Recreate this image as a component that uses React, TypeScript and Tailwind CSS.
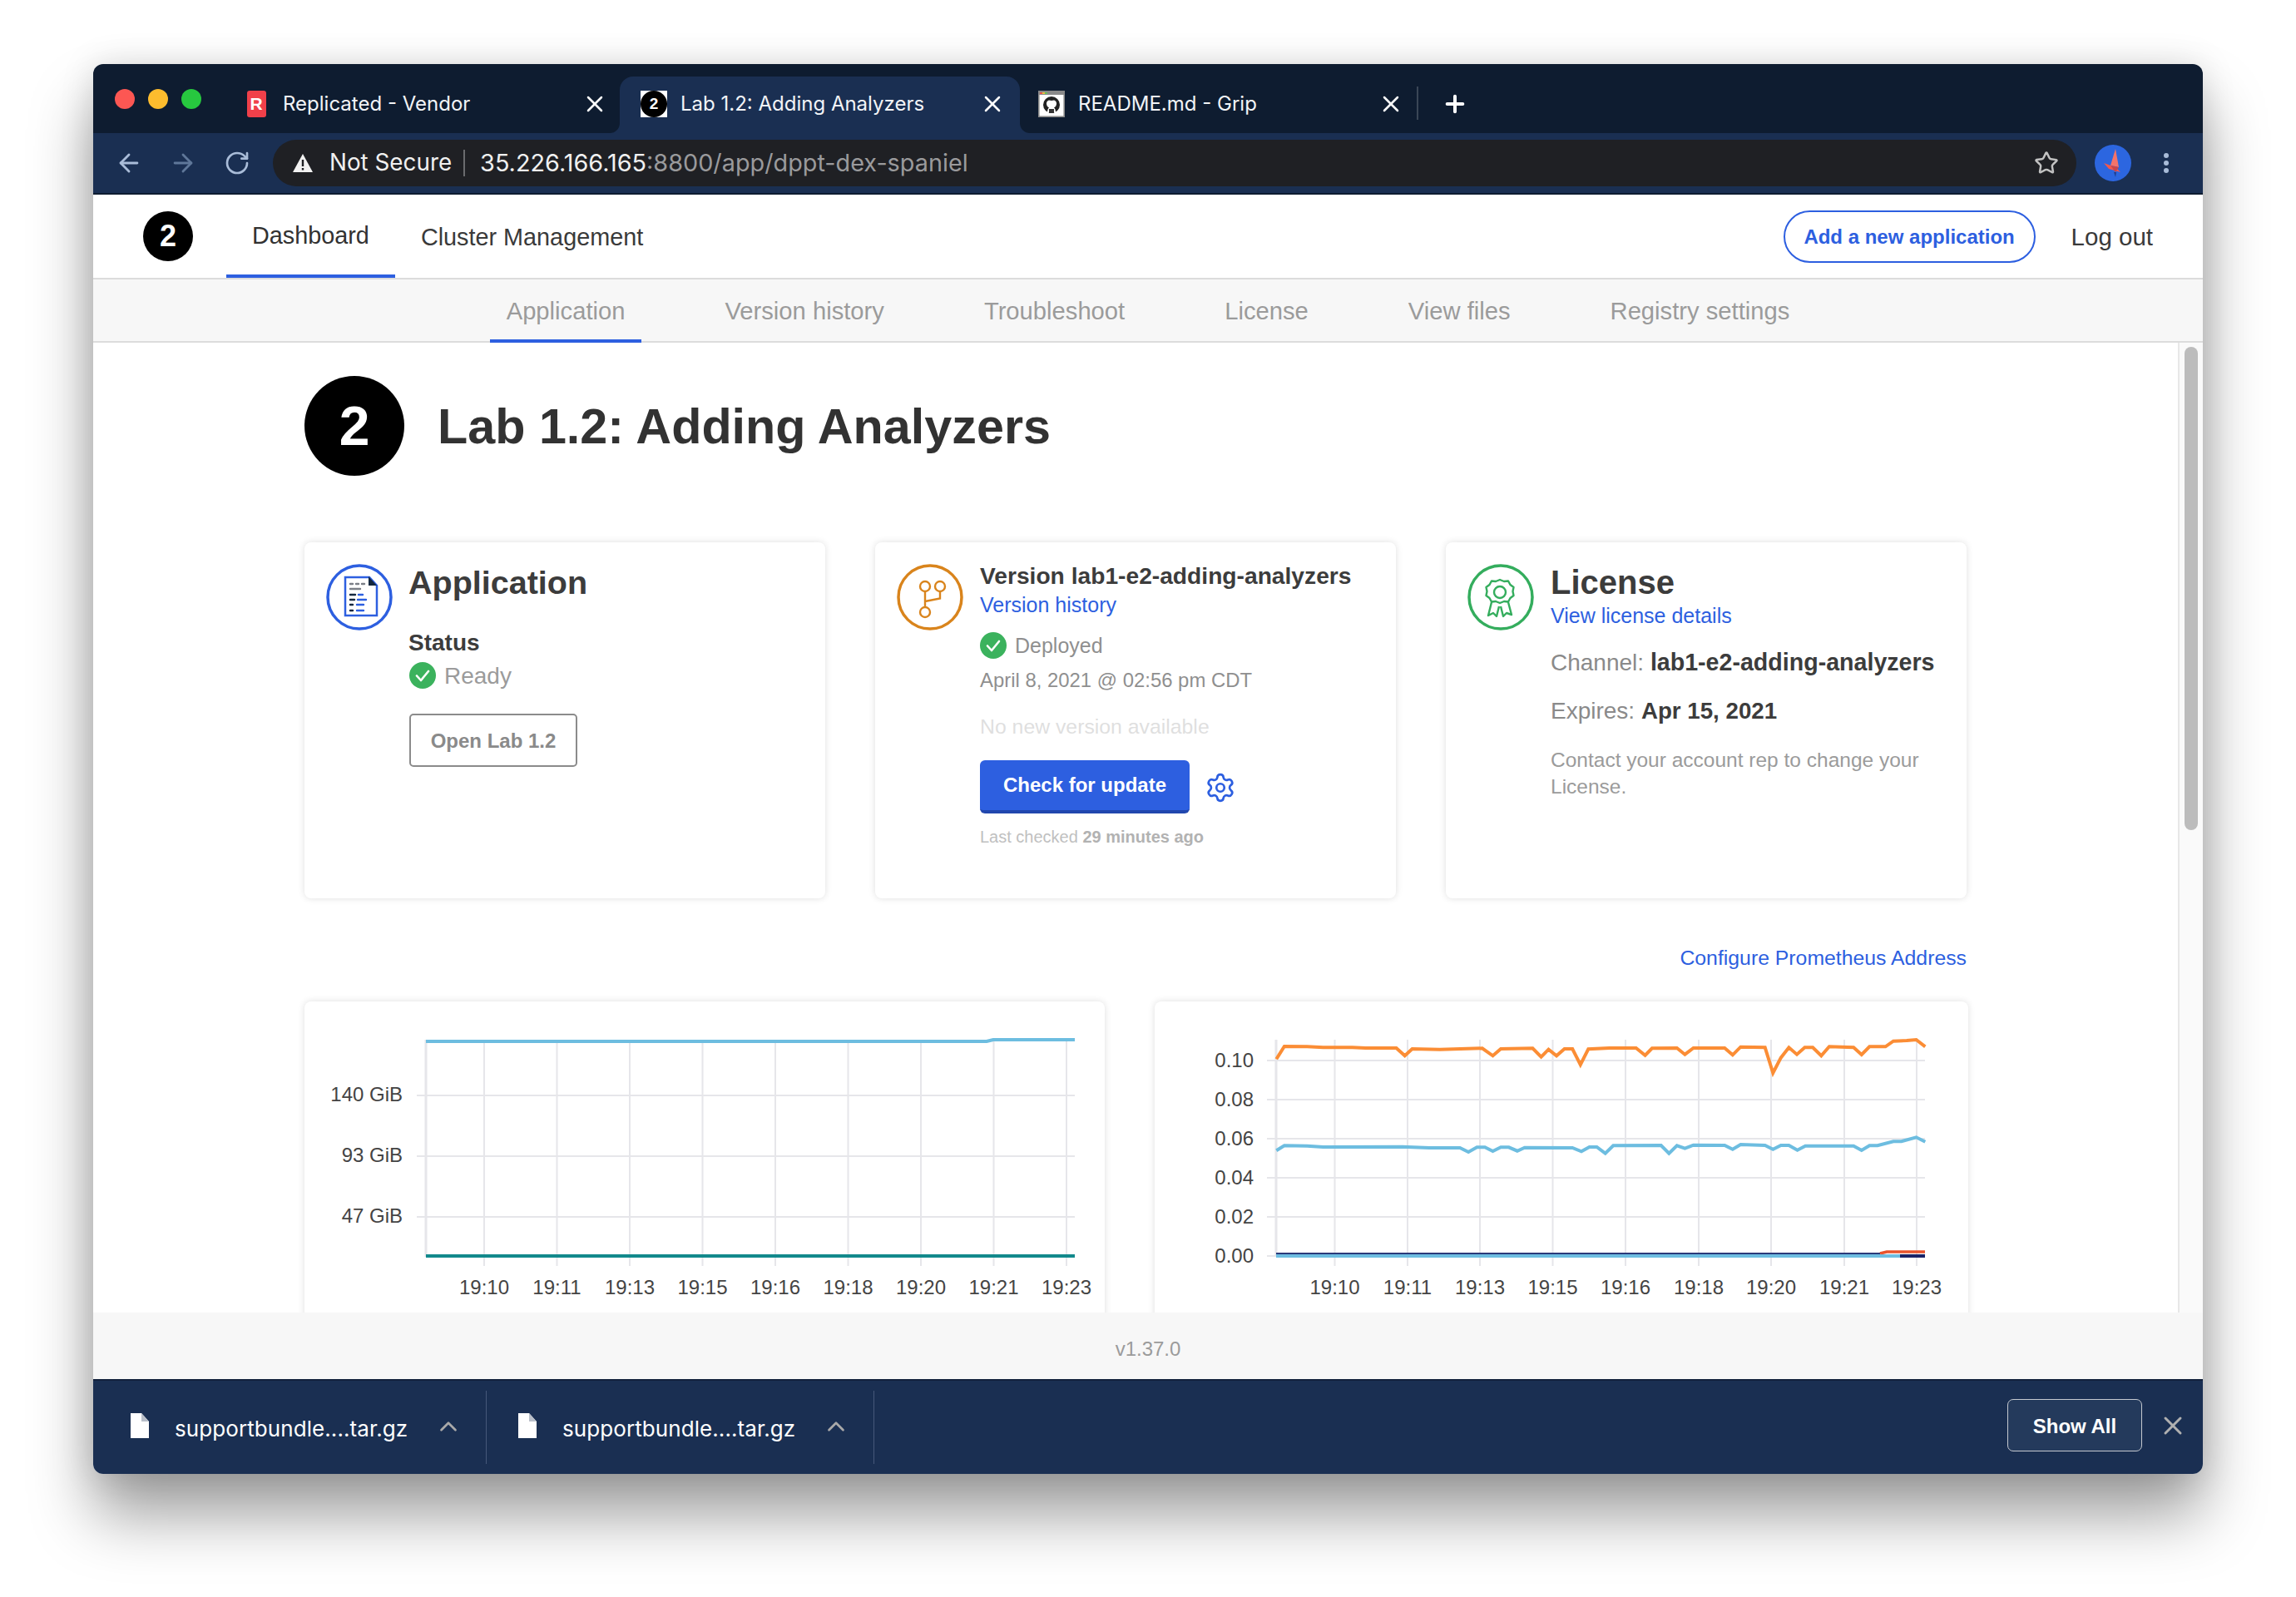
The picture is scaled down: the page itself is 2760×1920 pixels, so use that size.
import React from "react";
import { ArrowLeft, ArrowRight, RotateCw, Star, Plus, X, ChevronUp, Settings } from "lucide-react";

const Favicon2 = () => (
  <div className="w-[32px] h-[32px] bg-white flex items-center justify-center shrink-0">
    <div className="w-[32px] h-[32px] rounded-full bg-black text-white text-[19px] font-bold flex items-center justify-center">2</div>
  </div>
);

const FaviconR = () => (
  <div className="w-[32px] h-[32px] flex items-center justify-center shrink-0">
    <div className="w-[23px] h-[32px] rounded-[3px] bg-[#f0404a] text-white text-[21px] font-bold flex items-center justify-center font-['Liberation_Sans']">R</div>
  </div>
);

const FaviconGit = () => (
  <svg width="32" height="32" viewBox="0 0 32 32" className="shrink-0">
    <rect x="0" y="0" width="32" height="32" fill="#ffffff" />
    <rect x="0" y="0" width="32" height="5" fill="#8a8a8a" />
    <rect x="2" y="2" width="3" height="2" fill="#e9574c" />
    <rect x="5" y="2" width="3" height="2" fill="#e8c13d" />
    <rect x="8" y="2" width="3" height="2" fill="#6fbf5b" />
    <rect x="0.8" y="0.8" width="30.4" height="30.4" fill="none" stroke="#8a8a8a" strokeWidth="1.6" />
    <circle cx="16" cy="17" r="10" fill="#222" />
    <path d="M11 26c0-3 1-5 2-5.500-2-1-3-3-3-5s1-3.500 3-4c2 .5 4 .5 6 0 2 .5 3 2 3 4s-1 4-3 5c1 .5 2 2.500 2 5.500z" fill="#fff" />
    <path d="M13 27v-5h6v5z" fill="#333" />
  </svg>
);

const Tab = ({ title, icon, active, pad }: { title: string; icon: React.ReactNode; active?: boolean; pad: string }) => (
  <div className={`relative w-[481px] h-[68px] flex items-center gap-[16px] rounded-t-[16px] ${pad} ${active ? "bg-[#1a2f52]" : ""}`}>
    {icon}
    <span className="flex-1 text-[24px] text-[#f2f4f7] font-['Inter'] whitespace-nowrap">{title}</span>
    <X size={32} strokeWidth={1.9} className="text-white shrink-0" />
    {active && (
      <>
        <span className="absolute left-[-12px] bottom-0 w-[12px] h-[12px] bg-[#1a2f52]">
          <span className="block w-[12px] h-[12px] bg-[#0e1c30] rounded-br-[12px]" />
        </span>
        <span className="absolute right-[-12px] bottom-0 w-[12px] h-[12px] bg-[#1a2f52]">
          <span className="block w-[12px] h-[12px] bg-[#0e1c30] rounded-bl-[12px]" />
        </span>
      </>
    )}
  </div>
);

const Check = () => (
  <svg width="32" height="32" viewBox="0 0 32 32" className="shrink-0">
    <circle cx="16" cy="16" r="16" fill="#3bb25d" />
    <path d="M9 16.500l5 5.500 9-11" fill="none" stroke="#fff" strokeWidth="2.600" strokeLinecap="round" strokeLinejoin="round" />
  </svg>
);

const DocIcon = () => (
  <svg width="80" height="80" viewBox="0 0 80 80" className="shrink-0">
    <circle cx="40" cy="40" r="38" fill="none" stroke="#2d5fe0" strokeWidth="3.500" />
    <path d="M23 16h29l9 10v36H23z" fill="#fff" stroke="#2d5fe0" strokeWidth="2.500" />
    <path d="M51 15l10 11H51z" fill="#14283f" />
    <g strokeWidth="2.400" strokeLinecap="round" fill="none">
      <path d="M29 24h3M36 24h3M43 24h3M29 30h12" stroke="#7b7f87" />
      <path d="M29 37h6M29 43h5M29 49h3M29 56h3" stroke="#14283f" />
      <path d="M39 37h5M38 43h10M37 49h8M37 56h8" stroke="#2d5fe0" />
    </g>
  </svg>
);

const BranchIcon = () => (
  <svg width="80" height="80" viewBox="0 0 80 80" className="shrink-0">
    <circle cx="40" cy="40" r="38" fill="none" stroke="#d9841c" strokeWidth="3.500" />
    <g fill="none" stroke="#d9841c" strokeWidth="2.400">
      <circle cx="34" cy="27" r="6" />
      <circle cx="52" cy="27" r="6" />
      <circle cx="34" cy="58" r="6" />
      <path d="M34 33v19M52 33v8.500L34 45" />
    </g>
  </svg>
);

const RibbonIcon = () => (
  <svg width="80" height="80" viewBox="0 0 80 80" className="shrink-0">
    <circle cx="40" cy="40" r="38" fill="none" stroke="#34ad5d" strokeWidth="3.500" />
    <g fill="none" stroke="#34ad5d" strokeWidth="2.400" strokeLinejoin="round">
      <path d="M39 19l5 2 5-.5 2.500 4.500 4 3-1 5 1 5-4 3-2.500 4.500-5-.5-5 2-5-2-5 .5-2.500-4.500-4-3 1-5-1-5 4-3 2.500-4.500 5 .5z" />
      <circle cx="39" cy="34" r="7" />
      <path d="M29 46l-4 16 6-3 4 4 3-12M49 46l4 15-6-2-4 4-3-12" />
    </g>
  </svg>
);

const Card = ({ icon, children }: { icon: React.ReactNode; children: React.ReactNode }) => (
  <div className="h-[428px] bg-white rounded-[8px] shadow-[0_0_8px_rgba(0,0,0,0.13)] pl-[26px] pt-[26px] flex gap-[20px]">
    {icon}
    <div className="flex-1 min-w-0">{children}</div>
  </div>
);

const times = ["19:10", "19:11", "19:13", "19:15", "19:16", "19:18", "19:20", "19:21", "19:23"];

const Chart1 = () => {
  const vx = [582, 669.5, 757, 844.5, 932, 1019.5, 1107, 1194.5, 1282];
  return (
    <svg className="block" width="962" height="400" viewBox="366 1204 962 400">
      <g stroke="#e6e6ea" strokeWidth="2">
        <path d="M512 1250V1511" strokeWidth="3" />
        {[1317, 1390, 1463].map((y) => <path key={y} d={`M501 ${y}H1292`} />)}
        {vx.map((x) => <path key={x} d={`M${x} 1250V1522`} />)}
      </g>
      <path d="M512 1252H1186L1194 1250H1292" fill="none" stroke="#6dbde0" strokeWidth="4" />
      <path d="M512 1510H1292" fill="none" stroke="#12898c" strokeWidth="4" />
      <g fontFamily="Liberation Sans" fontSize="24" fill="#444" textAnchor="end">
        <text x="484" y="1324">140 GiB</text>
        <text x="484" y="1397">93 GiB</text>
        <text x="484" y="1470">47 GiB</text>
      </g>
      <g fontFamily="Liberation Sans" fontSize="24" fill="#444" textAnchor="middle">
        {vx.map((x, i) => <text key={x} x={x} y="1555.500">{times[i]}</text>)}
      </g>
    </svg>
  );
};

const orange: number[][] = [[242,280],[257,234],[300,235],[330,238],[385,238],[410,240],[468,240],[484,268],[498,243],[550,245],[630,241],[650,268],[665,243],[725,241],[741,272],[755,245],[770,268],[785,243],[800,243],[815,300],[830,244],[870,240],[920,240],[937,266],[950,241],[997,240],[1012,263],[1028,240],[1087,240],[1102,265],[1117,236],[1163,238],[1178,330],[1193,275],[1208,238],[1223,263],[1238,238],[1253,238],[1269,268],[1284,235],[1330,238],[1345,264],[1360,235],[1390,235],[1405,215],[1430,213],[1448,210],[1465,235]];
const blue: number[][] = [[242,610],[257,592],[300,593],[330,597],[480,596],[530,600],[588,600],[604,615],[620,598],[635,598],[650,612],[665,598],[680,598],[696,611],[710,599],[800,600],[817,613],[832,597],[846,597],[862,620],[877,592],[967,591],[982,620],[997,592],[1012,602],[1028,590],[1087,591],[1102,605],[1117,588],[1163,591],[1178,605],[1193,591],[1208,591],[1224,608],[1239,593],[1330,593],[1345,609],[1360,592],[1375,592],[1405,577],[1420,577],[1448,562],[1465,578]];
const toPts = (p: number[][]) => p.map(([x, y]) => `${(1380 + x / 1.568).toFixed(1)},${(1180 + y / 3).toFixed(1)}`).join(" ");

const Chart2 = () => {
  const vx = [1604.5, 1692, 1779, 1866.5, 1954, 2042, 2129, 2217, 2304];
  const ys: [number, string][] = [[1275, "0.10"], [1322, "0.08"], [1369, "0.06"], [1416, "0.04"], [1463, "0.02"], [1510, "0.00"]];
  return (
    <svg className="block" width="978" height="400" viewBox="1388 1204 978 400">
      <g stroke="#e6e6ea" strokeWidth="2">
        <path d="M1534 1250V1511" strokeWidth="3" />
        {ys.map(([y]) => <path key={y} d={`M1523 ${y}H2314`} />)}
        {vx.map((x) => <path key={x} d={`M${x} 1250V1522`} />)}
      </g>
      <polyline points={toPts(orange)} fill="none" stroke="#fb8d35" strokeWidth="4" />
      <polyline points={toPts(blue)} fill="none" stroke="#6dbde0" strokeWidth="4" />
      <path d="M1534 1507H2260" stroke="#2a3a7a" strokeWidth="2" />
      <path d="M2260 1507L2268 1505H2314" stroke="#e8532b" strokeWidth="3.500" fill="none" />
      <path d="M2284 1510H2314" stroke="#1a2468" strokeWidth="4" />
      <path d="M1534 1510H2284" stroke="#6dbde0" strokeWidth="4" />
      <g fontFamily="Liberation Sans" fontSize="24" fill="#444" textAnchor="end">
        {ys.map(([y, l]) => <text key={y} x="1507" y={y + 8}>{l}</text>)}
      </g>
      <g fontFamily="Liberation Sans" fontSize="24" fill="#444" textAnchor="middle">
        {vx.map((x, i) => <text key={x} x={x} y="1555.500">{times[i]}</text>)}
      </g>
    </svg>
  );
};

const Download = ({ box }: { box: string }) => (
  <div className={`h-[88px] flex items-center border-r-[1px] border-[#46587a] ${box}`}>
    <svg width="22" height="30" viewBox="0 0 22 30" className="shrink-0 mb-[5px]">
      <path d="M0 0h13l9 10v20H0z" fill="#fff" />
      <path d="M13 0l9 10h-9z" fill="#b9bfc9" />
    </svg>
    <span className="ml-[31px] mt-[3px] text-[26px] text-white font-['Inter'] whitespace-nowrap w-[280px] tracking-[0.08px]">supportbundle....tar.gz</span>
    <ChevronUp size={34} strokeWidth={1.900} className="ml-[32px] text-[#a9a9a9] mb-[2px]" />
  </div>
);

export default function App() {
  return (
    <div className="w-[2760px] h-[1920px] bg-white pt-[77px] pl-[112px] font-['Liberation_Sans',sans-serif] overflow-hidden">
      <div className="w-[2536px] h-[1695px] flex flex-col rounded-[12px] overflow-hidden shadow-[0_50px_75px_rgba(0,0,0,0.38),0_0_40px_rgba(0,0,0,0.13)]">
        {/* Tab strip */}
        <div className="h-[83px] bg-[#0e1c30] flex items-end shrink-0">
          <div className="w-[152px] h-[68px] flex items-center pl-[26px] gap-[16px] pb-[14px]">
            <span className="w-[24px] h-[24px] rounded-full bg-[#fc5753]" />
            <span className="w-[24px] h-[24px] rounded-full bg-[#fdbc2e]" />
            <span className="w-[24px] h-[24px] rounded-full bg-[#27c83f]" />
          </div>
          <Tab title="Replicated - Vendor" icon={<FaviconR />} pad="pl-[28px] pr-[14px] pb-[2px]" />
          <Tab title="Lab 1.2: Adding Analyzers" icon={<Favicon2 />} active pad="pl-[25px] pr-[17px] pb-[2px]" />
          <Tab title="README.md - Grip" icon={<FaviconGit />} pad="pl-[22px] pr-[19px] pb-[2px]" />
          <div className="h-[68px] flex items-center">
            <span className="w-[2px] h-[40px] bg-[#3a4656] mb-[4px] ml-[-4px]" />
            <Plus size={32} strokeWidth={3} className="text-white ml-[28px] mb-[2px]" />
          </div>
        </div>
        {/* Toolbar */}
        <div className="h-[74px] bg-[#1a2f52] border-b-[2px] border-[#0e1c30] flex items-center shrink-0 pl-[26px]">
          <ArrowLeft size={34} strokeWidth={2} className="text-[#a9bcd8]" />
          <ArrowRight size={34} strokeWidth={2} className="text-[#5f7799] ml-[31px]" />
          <RotateCw size={32} strokeWidth={2} className="text-[#a9bcd8] ml-[32px]" />
          <div className="ml-[27px] w-[2168px] h-[56px] rounded-full bg-[#1f2024] flex items-center pl-[23px] pr-[21px]">
            <svg width="26" height="24" viewBox="0 0 26 24" className="shrink-0">
              <path d="M13 1l12 22H1z" fill="#f2f2f2" />
              <path d="M13 8v8M13 18v2.500" stroke="#1f2024" strokeWidth="2.400" />
            </svg>
            <span className="ml-[19px] text-[27.800px] text-[#f0f0f0] font-['Inter'] whitespace-nowrap">Not Secure</span>
            <span className="ml-[14px] w-[2px] h-[32px] bg-[#6a6b6e]" />
            <span className="ml-[18px] text-[28.800px] text-[#f0f0f0] font-['Inter'] whitespace-nowrap flex-1">
              35.226.166.165<span className="text-[#9a9a9c]">:8800/app/dppt-dex-spaniel</span>
            </span>
            <Star size={30} strokeWidth={2} className="text-[#c2c2c2]" />
          </div>
          <div className="ml-[22px] w-[44px] h-[44px] rounded-full bg-[#2c66e0] flex items-center justify-center shrink-0">
            <svg width="34" height="38" viewBox="0 0 34 38">
              <path d="M20 2l4 22-10-2z" fill="#f4736a" />
              <path d="M6 19l14 5 6 6-14-4z" fill="#f0584f" />
              <path d="M14 22l10 2-4 6z" fill="#c9454a" />
              <path d="M18 30l2 6 1-6z" fill="#1f3f90" />
            </svg>
          </div>
          <div className="ml-[39px] w-[8px] flex flex-col gap-[3px] shrink-0">
            <span className="w-[6px] h-[6px] rounded-full bg-[#a9bcd8]" />
            <span className="w-[6px] h-[6px] rounded-full bg-[#a9bcd8]" />
            <span className="w-[6px] h-[6px] rounded-full bg-[#a9bcd8]" />
          </div>
        </div>
        {/* Main nav */}
        <div className="h-[102px] bg-white border-b-[2px] border-[#dcdcdc] flex items-stretch shrink-0 pl-[60px] pr-[60px]">
          <div className="w-[60px] h-[60px] rounded-full bg-black text-white text-[36px] font-bold flex items-center justify-center self-center">2</div>
          <div className="ml-[40px] px-[31px] pt-[4px] flex items-center border-b-[4px] border-[#2d5fe0] text-[28.800px] text-[#323232] whitespace-nowrap">Dashboard</div>
          <div className="px-[31px] pt-[3px] flex items-center text-[28.800px] text-[#3a3a3a] whitespace-nowrap">Cluster Management</div>
          <div className="ml-auto flex items-center">
            <div className="w-[303px] h-[63px] pt-[2px] rounded-[32px] border-[2px] border-[#2d5fe0] text-[#2d5fe0] text-[24px] font-bold flex items-center justify-center">Add a new application</div>
            <span className="ml-[43px] pt-[2px] text-[29.500px] text-[#3a3a3a] whitespace-nowrap">Log out</span>
          </div>
        </div>
        {/* Sub nav */}
        <div className="h-[76px] bg-[#f7f7f7] border-b-[2px] border-[#dcdcdc] flex justify-center gap-[80px] shrink-0">
          {["Application", "Version history", "Troubleshoot", "License", "View files", "Registry settings"].map((t, i) => (
            <div key={t} className={`px-[20px] flex items-center text-[29.200px] text-[#9b9b9b] whitespace-nowrap h-[76px] ${i === 0 ? "pt-[5px] border-b-[4px] border-[#2d5fe0]" : "pt-[1px]"}`}>{t}</div>
          ))}
        </div>
        {/* Main */}
        <div className="h-[1166px] flex overflow-hidden shrink-0 bg-white">
          <div className="flex-1 pl-[254px] pt-[40px]">
            <div className="w-[2000px]">
              <div className="flex items-center gap-[40px] h-[120px]">
                <div className="w-[120px] h-[120px] rounded-full bg-black text-white text-[66px] font-bold flex items-center justify-center">2</div>
                <h1 className="pt-[2px] text-[59.300px] font-bold text-[#323232] whitespace-nowrap">Lab 1.2: Adding Analyzers</h1>
              </div>
              <div className="mt-[80px] grid grid-cols-[626px_626px_626px] gap-[60px]">
                <Card icon={<DocIcon />}>
                  <div className="ml-[-1px] text-[39.500px] leading-[44px] font-bold text-[#3c3c3c]">Application</div>
                  <div className="mt-[34px] ml-[-1px] text-[28px] leading-[34px] font-bold text-[#3c3c3c]">Status</div>
                  <div className="mt-[6px] h-[32px] flex items-center gap-[10px]">
                    <Check />
                    <span className="text-[28px] text-[#9b9b9b] pt-[1px]">Ready</span>
                  </div>
                  <div className="mt-[30px] pt-[2px] w-[202px] h-[64px] border-[2px] border-[#8b8b8b] rounded-[5px] text-[24px] font-bold text-[#8a8a8a] flex items-center justify-center">Open Lab 1.2</div>
                </Card>
                <Card icon={<BranchIcon />}>
                  <div className="mt-[-1px] text-[28.200px] leading-[30px] font-bold text-[#3c3c3c] whitespace-nowrap">Version lab1-e2-adding-analyzers</div>
                  <div className="mt-[5px] text-[25px] leading-[30px] text-[#2d5fe0]">Version history</div>
                  <div className="mt-[18px] h-[32px] flex items-center gap-[10px]">
                    <Check />
                    <span className="text-[25px] text-[#8f8f8f] pt-[1px]">Deployed</span>
                  </div>
                  <div className="mt-[11px] text-[23.900px] leading-[30px] text-[#8f8f8f] whitespace-nowrap">April 8, 2021 @ 02:56 pm CDT</div>
                  <div className="mt-[26px] text-[24.800px] leading-[30px] text-[#dfdfdf] whitespace-nowrap">No new version available</div>
                  <div className="mt-[25px] flex items-center">
                    <div className="w-[252px] h-[64px] rounded-[6px] bg-[#2d5fe0] border-b-[4px] border-[#2147ae] text-white text-[24px] font-bold flex items-center justify-center">Check for update</div>
                    <Settings size={38} strokeWidth={1.700} className="ml-[18px] mt-[2px] text-[#2d5fe0]" />
                  </div>
                  <div className="mt-[15px] text-[20px] leading-[26px] text-[#c0c0c0] whitespace-nowrap">Last checked <span className="font-bold text-[#b2b2b2]">29 minutes ago</span></div>
                </Card>
                <Card icon={<RibbonIcon />}>
                  <div className="text-[40px] leading-[44px] font-bold text-[#3c3c3c]">License</div>
                  <div className="mt-[3px] text-[25px] leading-[30px] text-[#2d5fe0]">View license details</div>
                  <div className="mt-[23px] text-[28px] leading-[36px] text-[#8a8a8a] whitespace-nowrap">Channel: <span className="text-[28.600px] font-bold text-[#3c3c3c]">lab1-e2-adding-analyzers</span></div>
                  <div className="mt-[22px] text-[28px] leading-[36px] text-[#8a8a8a] whitespace-nowrap">Expires: <span className="text-[27.700px] font-bold text-[#3c3c3c]">Apr 15, 2021</span></div>
                  <div className="mt-[25px] w-[460px] text-[24.500px] leading-[32px] text-[#9b9b9b]">Contact your account rep to change your License.</div>
                </Card>
              </div>
              <div className="mt-[52px] pr-[2px] text-right text-[24.800px] leading-[40px] text-[#2d5fe0]">Configure Prometheus Address</div>
              <div className="mt-[32px] flex gap-[60px]">
                <div className="w-[962px] h-[400px] bg-white rounded-[8px] shadow-[0_0_8px_rgba(0,0,0,0.13)]"><Chart1 /></div>
                <div className="w-[978px] h-[400px] bg-white rounded-[8px] shadow-[0_0_8px_rgba(0,0,0,0.13)]"><Chart2 /></div>
              </div>
            </div>
          </div>
          <div className="w-[30px] shrink-0 border-l-[2px] border-[#e8e8e8] bg-[#fafafa] pl-[6px] pt-[5px]">
            <div className="w-[16px] h-[581px] rounded-full bg-[#bcbcbc]" />
          </div>
        </div>
        {/* Footer */}
        <div className="h-[80px] bg-[#f7f7f7] flex items-center justify-center shrink-0 text-[24px] text-[#9b9b9b]">
          <span className="mt-[8px]">v1.37.0</span>
        </div>
        {/* Downloads */}
        <div className="h-[114px] bg-[#1a2f52] border-t-[2px] border-[#12213c] flex items-center shrink-0">
          <Download box="w-[473px] pl-[45px]" />
          <Download box="w-[466px] pl-[38px]" />
          <div className="ml-auto mb-[5px] pt-[3px] w-[162px] h-[63px] rounded-[7px] border-[1px] border-[#c5c9d0] bg-[#243a5c] text-white text-[24px] font-bold flex items-center justify-center">Show All</div>
          <X size={36} strokeWidth={2} className="text-[#b0b0b0] ml-[19px] mr-[18px] mb-[4px]" />
        </div>
      </div>
    </div>
  );
}
